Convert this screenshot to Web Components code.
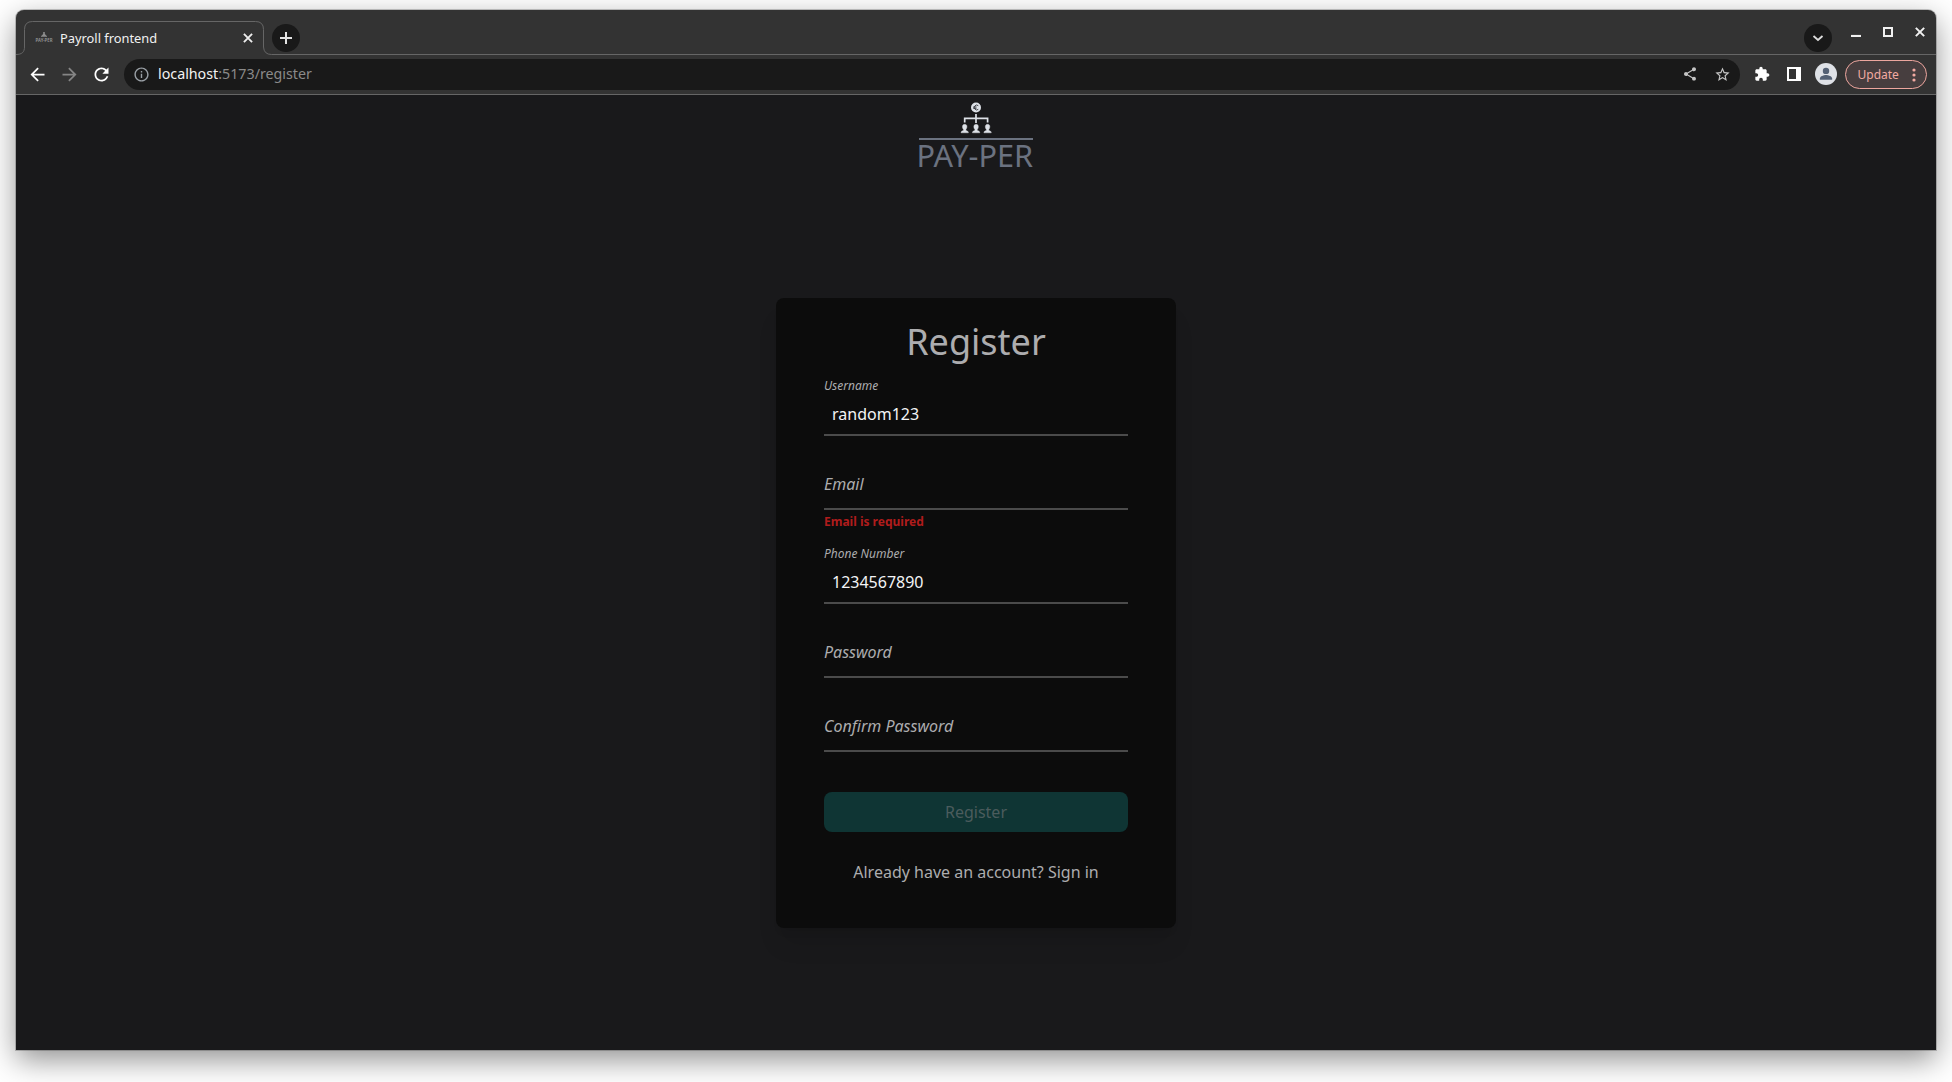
<!DOCTYPE html>
<html lang="en">
<head>
<meta charset="utf-8">
<title>Payroll frontend</title>
<style>
html,body{margin:0;height:100%}
body{background:#fff;font-family:"Noto Sans",sans-serif;overflow:hidden;box-sizing:border-box;padding:10px 16px 32px}
</style>
</head>
<body>
<browser-window>
  <tab-strip slot="tabs">Payroll frontend</tab-strip>
  <tool-bar slot="tools" host="localhost" path=":5173/register"></tool-bar>
  <brand-logo></brand-logo>
  <register-card heading="Register">
    <text-field label="Username" value="random123"></text-field>
    <text-field label="Email" error="Email is required"></text-field>
    <text-field label="Phone Number" value="1234567890"></text-field>
    <text-field label="Password"></text-field>
    <text-field label="Confirm Password"></text-field>
    <submit-button>Register</submit-button>
    <span slot="footer">Already have an account? Sign in</span>
  </register-card>
</browser-window>
<script>
const define = (name, render) => customElements.define(name, class extends HTMLElement {
  constructor(){ super(); this.attachShadow({mode:'open'}); }
  connectedCallback(){ this.shadowRoot.innerHTML = render(this); }
});

const ICONS = {
  back:'<path d="M20 11H7.83l5.59-5.59L12 4l-8 8 8 8 1.41-1.41L7.83 13H20v-2z"/>',
  forward:'<path d="M12 4l-1.41 1.41L16.17 11H4v2h12.17l-5.58 5.59L12 20l8-8z"/>',
  reload:'<path d="M17.65 6.35C16.2 4.9 14.21 4 12 4c-4.42 0-7.99 3.58-7.99 8s3.57 8 7.99 8c3.73 0 6.84-2.55 7.73-6h-2.08c-.82 2.33-3.04 4-5.65 4-3.31 0-6-2.69-6-6s2.69-6 6-6c1.66 0 3.14.69 4.22 1.78L13 11h7V4l-2.35 2.35z"/>',
  info:'<path d="M11 7h2v2h-2zm0 4h2v6h-2zm1-9C6.48 2 2 6.48 2 12s4.48 10 10 10 10-4.480 10-10S17.520 2 12 2zm0 18c-4.410 0-8-3.590-8-8s3.590-8 8-8 8 3.590 8 8-3.590 8-8 8z"/>',
  share:'<path d="M18 16.080c-.76 0-1.440.3-1.960.77L8.910 12.700c.05-.23.09-.46.09-.7s-.04-.47-.09-.7l7.050-4.110c.54.5 1.250.81 2.040.81 1.660 0 3-1.340 3-3s-1.340-3-3-3-3 1.340-3 3c0 .24.04.47.09.7L8.040 9.810C7.500 9.310 6.790 9 6 9c-1.660 0-3 1.340-3 3s1.340 3 3 3c.79 0 1.500-.31 2.040-.81l7.120 4.160c-.05.21-.08.43-.08.65 0 1.610 1.310 2.920 2.920 2.920s2.920-1.310 2.920-2.920-1.310-2.920-2.920-2.920z"/>',
  star:'<path d="M22 9.240l-7.190-.62L12 2 9.190 8.630 2 9.240l5.460 4.730L5.820 21 12 17.270 18.180 21l-1.630-7.030L22 9.240zM12 15.400l-3.760 2.270 1-4.280-3.320-2.880 4.380-.38L12 6.100l1.710 4.040 4.380.38-3.320 2.880 1 4.280L12 15.400z"/>',
  puzzle:'<path d="M20.500 11H19V7c0-1.100-.9-2-2-2h-4V3.500C13 2.120 11.880 1 10.500 1S8 2.120 8 3.500V5H4c-1.100 0-1.990.9-1.990 2v3.800H3.500c1.490 0 2.700 1.210 2.700 2.700s-1.210 2.700-2.700 2.700H2V20c0 1.100.9 2 2 2h3.800v-1.500c0-1.490 1.210-2.700 2.700-2.700s2.700 1.210 2.700 2.700V22H17c1.100 0 2-.9 2-2v-4h1.500c1.380 0 2.500-1.120 2.500-2.500S21.880 11 20.500 11z"/>',
  panel:'<path fill-rule="evenodd" d="M0 0H24V24H0zM3.430 3.430V20.570H15.430V3.430z"/>',
  close:'<path d="M5 5L19 19M19 5L5 19" fill="none" stroke="currentColor" stroke-width="3.200"/>',
  plus:'<path d="M12 3V21M3 12H21" fill="none" stroke="currentColor" stroke-width="3"/>',
  chevron:'<path d="M3 8l9 8 9-8" fill="none" stroke="currentColor" stroke-width="3.600"/>',
  minimize:'<path d="M0 19H24V24H0z"/>',
  maximize:'<path fill-rule="evenodd" d="M0 0H24V24H0zM4.800 4.800V19.200H19.200V4.800z"/>',
  winclose:'<path d="M2 2L22 22M22 2L2 22" fill="none" stroke="currentColor" stroke-width="4.800"/>',
  avatar:'<circle cx="12" cy="12" r="12" fill="#dee1e6"/><g fill="#536074"><circle cx="12" cy="8.600" r="3.500"/><path d="M5.300 18.400V17c0-2.500 4.500-3.800 6.700-3.800s6.700 1.300 6.700 3.800v1.400z"/></g>'
};
define('ui-icon', el => `
<style>:host{display:block;flex:none}svg{display:block;width:100%;height:100%}</style>
<svg viewBox="0 0 24 24" fill="currentColor">${ICONS[el.getAttribute('name')]}</svg>`);

define('browser-window', () => `
<style>
:host{display:flex;flex-direction:column;height:1040px;border-radius:8px 8px 0 0;background:#333;
 box-shadow:0 0 0 1px rgba(0,0,0,.2),0 10px 30px rgba(0,0,0,.43)}
main{flex:1;background:#19191b;display:flex;flex-direction:column;align-items:center}
</style>
<slot name="tabs"></slot><slot name="tools"></slot><main><slot></slot></main>`);

define('tab-strip', () => `
<style>
:host{display:flex;position:relative;height:45px;flex:none;color:#f1f1f1;font-size:13px;line-height:18px}
.edge{position:absolute;left:0;top:0}
.tab{position:relative;display:flex;align-items:center;width:240px;height:33px;margin:11px 0 0 8px;box-sizing:border-box;padding:0 9px 0 11px}
.fav{display:flex;flex-direction:column;align-items:center;width:18px;margin-right:7px;flex:none;color:#999}
.fav svg{display:block;margin-bottom:-1px}
.fav span{display:block;font-size:4.300px;line-height:6px;font-weight:600;white-space:nowrap}
.title{flex:1;font-size:12.850px;white-space:nowrap;margin-top:1px}
.round{position:relative;display:grid;place-items:center;width:28px;height:28px;border-radius:50%;background:#191919;margin-top:14px}
.new{margin-left:8px}.gap{flex:1}.menu{margin-right:19px}
.controls{position:relative;display:flex;gap:22px;padding:17px 11px 0 0}
.controls ui-icon{width:10px;height:10px}
</style>
<svg class="edge" width="1920" height="45" fill="none" stroke="#666"><path d="M0 44.500C6 44.500 8.500 42 8.500 37V19.500Q8.500 11.500 16.500 11.500H239.500Q247.500 11.500 247.500 19.500V37Q248 44.500 255.500 44.500H1920"/></svg>
<div class="tab">
 <div class="fav"><svg width="18" height="6" fill="#8d8d8d"><path d="M8.200 0h1.600v1.800l1.500 2h.7v1H6v-1h.7l1.500-2z"/></svg><span>PAY-PER</span></div>
 <span class="title"><slot></slot></span><ui-icon name="close" style="width:14px;height:14px;color:#eee"></ui-icon>
</div>
<div class="round new"><ui-icon name="plus" style="width:16px;height:16px;color:#e4e4e4"></ui-icon></div>
<div class="gap"></div>
<div class="round menu"><ui-icon name="chevron" style="width:12px;height:12px;color:#ddd"></ui-icon></div>
<div class="controls"><ui-icon name="minimize"></ui-icon><ui-icon name="maximize"></ui-icon><ui-icon name="winclose"></ui-icon></div>`);

define('tool-bar', el => `
<style>
:host{display:flex;align-items:flex-start;height:40px;flex:none;box-sizing:border-box;border-bottom:1px solid #666;color:#fff;padding:4px 9px 0 11px}
.nav{display:flex;align-items:center;gap:11px;margin-right:12px;height:30px}
.nav ui-icon{width:21px;height:21px}
.omni{flex:1;display:flex;align-items:center;height:31px;border-radius:16px;background:#191919;font-size:14.250px;color:#8a8a8a;padding:0 9.500px 0 9px;box-sizing:border-box}
.omni ui-icon{margin-top:-1px}
.url{flex:1;line-height:20px;margin:-1px 0 0 8px}b{font-weight:400;color:#f2f2f2}
.tools{display:flex;align-items:center;height:31px;margin-left:14px}
.tools ui-icon{margin-top:-1px}
.update{display:flex;align-items:center;justify-content:space-between;box-sizing:border-box;width:82px;height:29px;margin-left:8px;padding:0 10px 0 11.500px;border:1px solid #eda69e;border-radius:15px;background:#473e3f;color:#f2aaa2;font-size:12px;line-height:16px}
</style>
<div class="nav"><ui-icon name="back"></ui-icon><ui-icon name="forward" style="color:#858585"></ui-icon><ui-icon name="reload"></ui-icon></div>
<div class="omni"><ui-icon name="info" style="width:17px;height:17px;color:#9aa0a6"></ui-icon>
 <span class="url"><b>${el.getAttribute('host')}</b>${el.getAttribute('path')}</span>
 <ui-icon name="share" style="width:16px;height:16px;color:#c4c4c4;margin-right:15.500px"></ui-icon>
 <ui-icon name="star" style="width:17px;height:17px;color:#c4c4c4"></ui-icon></div>
<div class="tools"><ui-icon name="puzzle" style="width:16px;height:16px;margin-right:17px"></ui-icon>
 <ui-icon name="panel" style="width:14px;height:14px;margin-right:14px"></ui-icon>
 <ui-icon name="avatar" style="width:22px;height:22px"></ui-icon>
 <div class="update"><span>Update</span><svg width="4" height="14" fill="currentColor"><circle cx="2" cy="2" r="1.600"/><circle cx="2" cy="7" r="1.600"/><circle cx="2" cy="12" r="1.600"/></svg></div></div>`);

define('brand-logo', () => `
<style>:host{display:block;width:128px;height:203px}svg{display:block}</style>
<svg width="128" height="80" viewBox="912 95 128 80">
 <circle cx="976" cy="107.500" r="5" fill="#dde1e7"/>
 <path d="M978.300 105.700A2.400 2.400 0 1 0 978.300 109.300M973.200 107H976.500M973.200 108.300H976.500" fill="none" stroke="#303238" stroke-width=".9"/>
 <path d="M976 114V123M964.700 122.500V118.300H987.600V122.500" fill="none" stroke="#dde1e7" stroke-width="1.700"/>
 <g fill="#dde1e7" stroke="#dde1e7" stroke-width=".4"><path id="p" d="M964.700 124.300c2.800 0 2.700 3.500 1.200 5.200v1c1.300.3 2.500.8 2.500 2.300h-7.400c0-1.500 1.200-2 2.500-2.300v-1c-1.500-1.700-1.600-5.200 1.200-5.200z"/><use href="#p" x="11.400"/><use href="#p" x="22.900"/></g>
 <path d="M919 138h114v2H919z" fill="#6b7280"/>
 <text x="916.500" y="166.500" font-size="30" font-weight="400" textLength="116.500" lengthAdjust="spacingAndGlyphs" fill="#6b7280">PAY-PER</text>
</svg>`);

define('register-card', el => `
<style>
:host{display:flex;flex-direction:column;box-sizing:border-box;width:400px;height:630px;padding:24px 48px 44px;background:#0c0c0c;border-radius:8px;color:#adadaf;
 box-shadow:0 20px 25px -5px rgba(0,0,0,.1),0 8px 10px -6px rgba(0,0,0,.1)}
h1{margin:0;font-weight:400;font-size:36px;line-height:40px;text-align:center}
footer{margin-top:28px;text-align:center;font-size:16px;line-height:24px}
</style>
<h1>${el.getAttribute('heading')}</h1><slot></slot><footer><slot name="footer"></slot></footer>`);

define('text-field', el => {
  const v = el.getAttribute('value'), e = el.getAttribute('error');
  return `
<style>
:host{display:block}
.box{display:flex;flex-direction:column;justify-content:flex-end;height:74px;box-sizing:border-box;border-bottom:2px solid #4b4b4b}
label{font-style:italic;font-size:16px;line-height:24px;padding-bottom:12px}
.filled label{font-size:12px;line-height:16px;padding-bottom:8px}
.value{font-size:16px;line-height:24px;padding:0 8px 8px;color:#f3f4f6}
.error{font-size:12px;line-height:16px;padding-top:4px;font-weight:700;color:#b01c1c}
</style>
<div class="box ${v ? 'filled' : ''}"><label>${el.getAttribute('label')}</label>${v ? `<div class="value">${v}</div>` : ''}</div>
${e ? `<div class="error">${e}</div>` : ''}`;
});

define('submit-button', () => `
<style>:host{display:block;margin-top:40px}
button{display:block;width:100%;height:40px;border:0;border-radius:8px;padding:0;background:#0f3534;color:#4b5c5d;font:16px/24px "Noto Sans",sans-serif}</style>
<button><slot></slot></button>`);
</script>
</body>
</html>
